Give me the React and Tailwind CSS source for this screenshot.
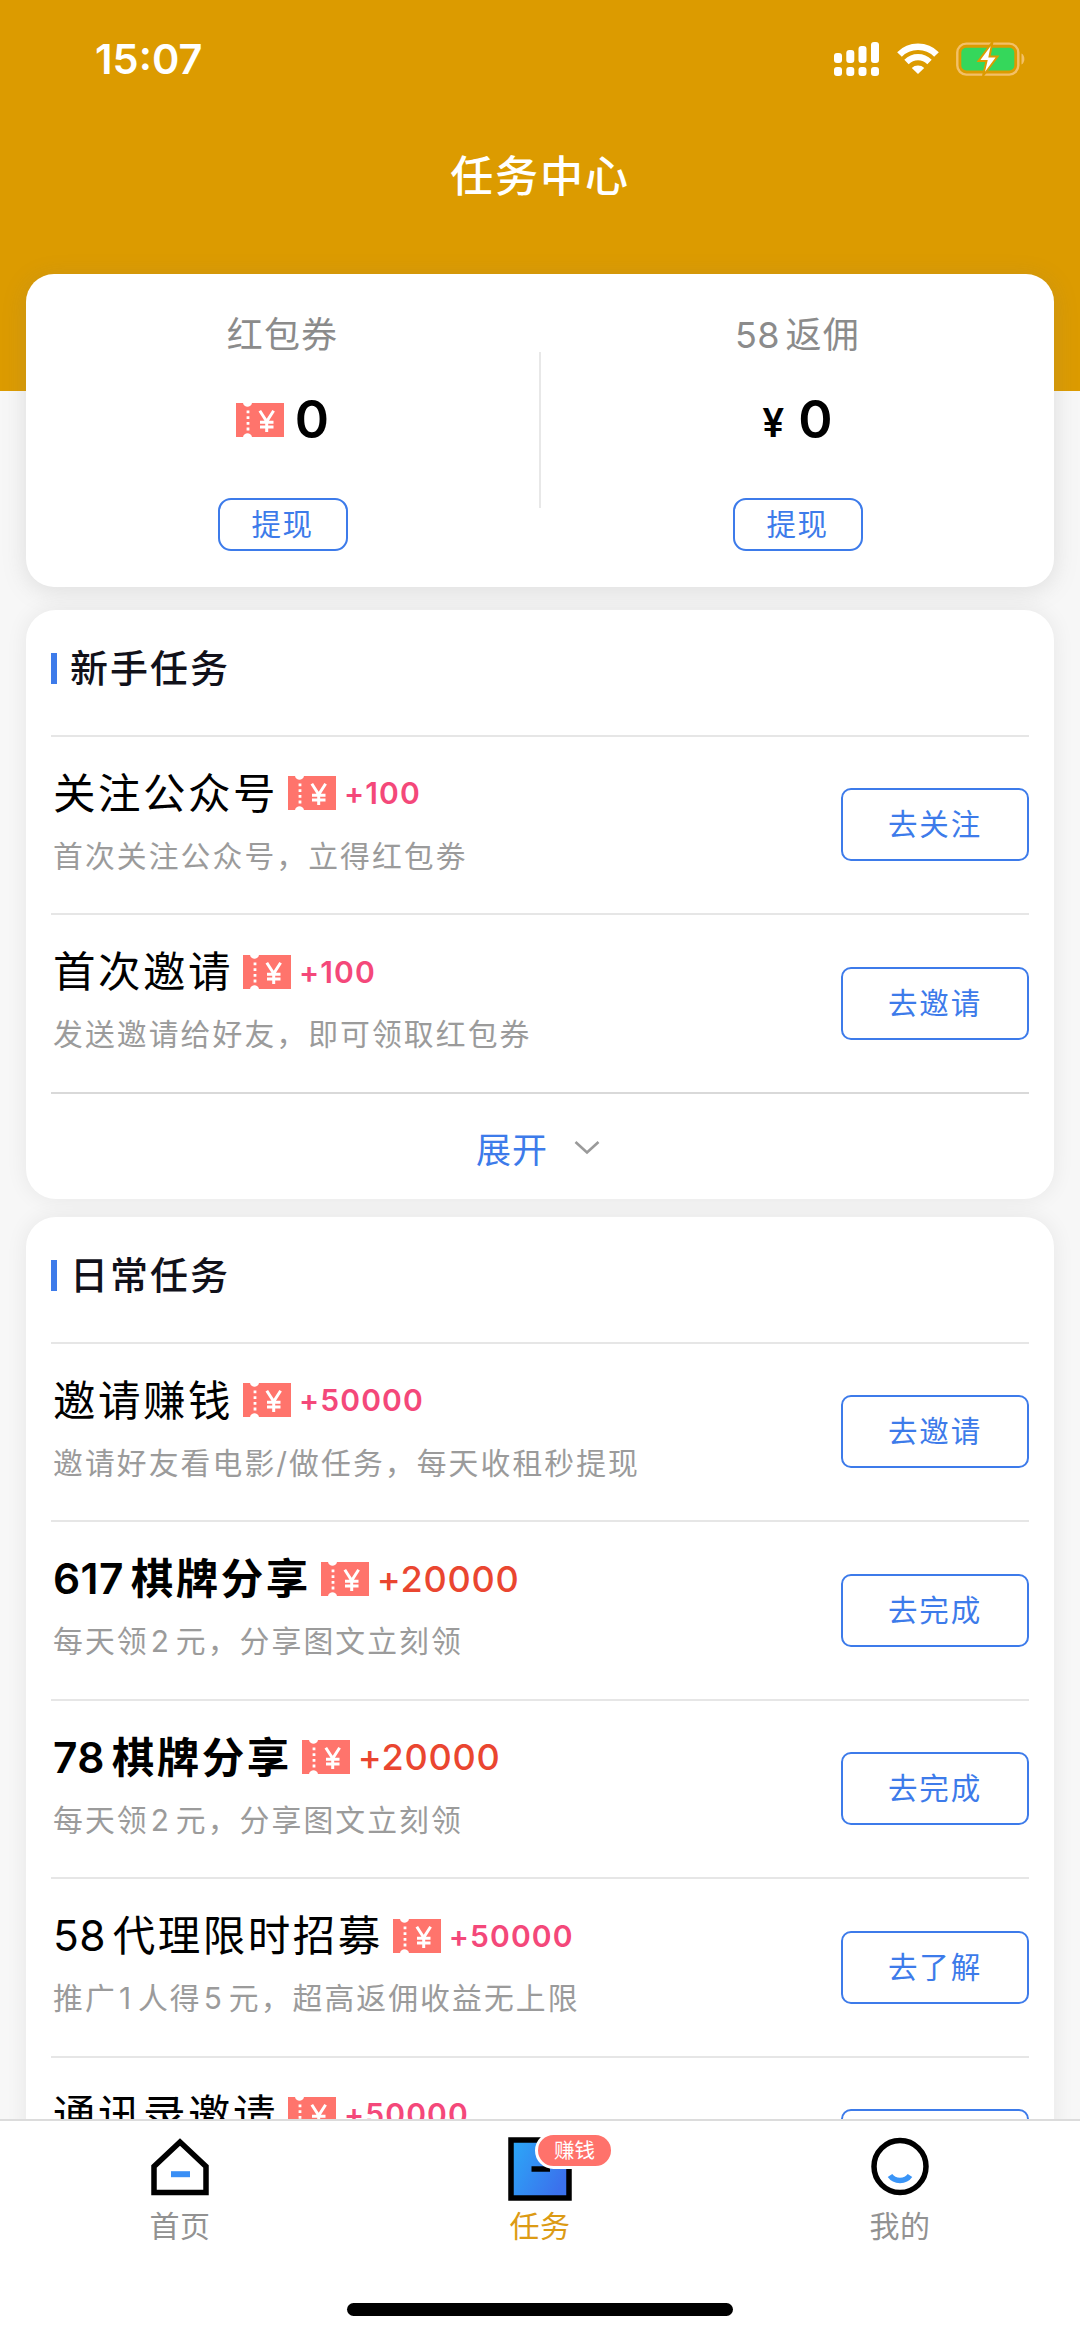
const newbieTasks = [
  { title: "关注公众号", desc: "首次关注公众号，立得红包劵", reward: "+100", action: "去关注" },
  { title: "首次邀请", desc: "发送邀请给好友，即可领取红包券", reward: "+100", action: "去邀请" },
];

const dailyTasks = [
  { title: "邀请赚钱", desc: "邀请好友看电影/做任务，每天收租秒提现", reward: "+50000", action: "去邀请" },
  { title: "617棋牌分享", desc: "每天领2元，分享图文立刻领", reward: "+20000", action: "去完成", hot: true },
  { title: "78棋牌分享", desc: "每天领2元，分享图文立刻领", reward: "+20000", action: "去完成", hot: true },
  { title: "58代理限时招募", desc: "推广1人得5元，超高返佣收益无上限", reward: "+50000", action: "去了解" },
  { title: "通讯录邀请", desc: "邀请通讯录好友，即可领取红包券", reward: "+50000", action: "去邀请" },
];

// Adds a small gap between digits and the Chinese characters around them
function Mixed({ text }) {
  return text.split(/(\d+)/).filter(Boolean).map((part, i) =>
    /^\d+$/.test(part) ? (
      <span key={i} className={i === 0 ? "mr-[0.16em] tracking-[0.01em]" : "ml-[0.07em] mr-[0.16em]"}>
        {part}
      </span>
    ) : (
      part
    )
  );
}

function Ticket() {
  return (
    <svg width="48" height="34" viewBox="0 0 48 34" className="shrink-0">
      <path d="M0 0H7C8 5 15 5 16 0H48V34H16C15 29 8 29 7 34H0Z" fill="#ff746c" />
      <path d="M12 7.5V28" stroke="#fff" strokeWidth="2.8" strokeDasharray="2.8 2.9" />
      <path
        d="M23.8 7.8L30.7 18.5L37.6 7.8M30.7 17.5V29M24 19.3H37.5M24 24H37.5"
        fill="none"
        stroke="#fff"
        strokeWidth="3"
      />
    </svg>
  );
}

function StatusBar() {
  return (
    <div className="flex h-[118px] items-center justify-between pl-[95px] pr-[54px]">
      <span className="mt-[2px] text-[41.5px] font-semibold leading-none">15:07</span>
      <div className="flex items-center">
        <svg width="46" height="34" viewBox="0 0 46 34" fill="#fff">
          <rect x="0" y="11" width="8" height="10" rx="3" />
          <rect x="12.3" y="8" width="8" height="13" rx="3" />
          <rect x="24.5" y="4" width="8" height="17" rx="3" />
          <rect x="37" y="0" width="8" height="21" rx="3" />
          <rect x="0" y="25" width="8" height="9" rx="3" />
          <rect x="12.3" y="25" width="8" height="9" rx="3" />
          <rect x="24.5" y="25" width="8" height="9" rx="3" />
          <rect x="37" y="25" width="8" height="9" rx="3" />
        </svg>
        <svg width="42" height="32" viewBox="0 0 42 32" fill="none" className="ml-[17px]">
          <path d="M2.5 11.5C12.5 1.2 29.5 1.2 39.5 11.5" stroke="#fff" strokeWidth="6.5" />
          <path d="M9.5 19C16 12.6 26 12.6 32.5 19" stroke="#fff" strokeWidth="6.2" />
          <path d="M21 31L14.8 25C18 21.7 24 21.7 27.2 25Z" fill="#fff" />
        </svg>
        <svg width="70" height="36" viewBox="0 0 70 36" className="ml-[17px]">
          <rect x="1.3" y="2.6" width="61" height="31" rx="9" fill="none" stroke="#f3c067" strokeWidth="2.4" />
          <rect x="5.3" y="6.8" width="53" height="22.6" rx="5" fill="#35d75b" />
          <path d="M65.5 12.5C69.3 14 69.3 22 65.5 23.5Z" fill="#f3c067" />
          <path
            d="M36.5 1L22.5 20H30.5L27 35L41.5 15.5H33.5Z"
            fill="#fff"
            stroke="#dc9b00"
            strokeWidth="2"
          />
        </svg>
      </div>
    </div>
  );
}

function Balance({ label, children }) {
  return (
    <div className="flex flex-1 flex-col items-center pt-[36px]">
      <div className="text-[36px] leading-[50px] tracking-[1.2px] text-[#8b8b8b]">
        <Mixed text={label} />
      </div>
      <div className="mt-[30px] flex h-[60px] items-center text-[52px] font-semibold leading-none text-black">
        {children}
      </div>
      <button className="mt-[48px] h-[53px] w-[130px] rounded-[13px] border-[2.5px] border-[#3d7bea] text-[29.5px] leading-none tracking-[1.4px] text-[#3d7bea]">
        提现
      </button>
    </div>
  );
}

function TaskRow({ title, desc, reward, action, hot }) {
  return (
    <div className="flex h-[178.5px] items-center justify-between border-t-2 border-[#e6e6e6]">
      <div className="h-full pl-[2px] pt-[27px]">
        <div className="flex h-[60px] items-center">
          <h3
            className={
              hot
                ? "text-[42.5px] font-semibold leading-[60px] tracking-[2.5px] text-black"
                : "text-[42.5px] leading-[60px] tracking-[2.5px] text-black"
            }
          >
            <Mixed text={title} />
          </h3>
          <div className="-mt-[1px] ml-[10px] flex items-center">
            <Ticket />
            <span
              className={
                hot
                  ? "ml-[8px] text-[36px] font-medium leading-none tracking-[0.8px] text-[#ea4630]"
                  : "ml-[8px] text-[30px] font-semibold leading-none tracking-[1.1px] text-[#f4487a]"
              }
            >
              {reward}
            </span>
          </div>
        </div>
        <p className="mt-[10px] text-[29.8px] leading-[44px] tracking-[2.1px] text-[#9b9b9b]">
          <Mixed text={desc} />
        </p>
      </div>
      <button className="h-[73px] w-[188px] shrink-0 rounded-[10px] border-[2.5px] border-[#3d7bea] text-[29.5px] leading-none tracking-[1.9px] text-[#3d7bea]">
        {action}
      </button>
    </div>
  );
}

function TaskCard({ title, tasks, children }) {
  return (
    <section className="rounded-[30px] bg-white px-[25px] shadow-[0_0_22px_rgba(0,0,0,0.07)]">
      <div className="flex h-[124.5px] items-center pb-[8px]">
        <span className="h-[31px] w-[6px] bg-[#3d7bea]" />
        <h2 className="ml-[13px] text-[38px] font-medium leading-none tracking-[2px] text-[#11111a]">{title}</h2>
      </div>
      {tasks.map((task) => (
        <TaskRow key={task.title} {...task} />
      ))}
      {children}
    </section>
  );
}

function TabBar() {
  return (
    <nav className="relative flex h-[218px] shrink-0 flex-col items-center border-t-2 border-[#dcdcdc] bg-white">
      <div className="flex w-full text-[30px] leading-[44px] text-[#929292]">
        <div className="flex flex-1 flex-col items-center pt-[16px]">
          <svg width="60" height="64" viewBox="0 0 60 64" fill="none">
            <path d="M4 55.5V29.5L30 5L56 29.5V55.5Z" stroke="#000" strokeWidth="5.5" />
            <path d="M21 37.2H40" stroke="#3a8ff5" strokeWidth="6" />
          </svg>
          <span className="mt-[3px] tracking-[0.5px]">首页</span>
        </div>
        <div className="flex flex-1 flex-col items-center pt-[16px] text-[#dc9b14]">
          <div className="relative">
            <svg width="64" height="64" viewBox="0 0 64 64">
              <defs>
                <linearGradient id="taskFill" x1="0" y1="0" x2="1" y2="0.5">
                  <stop offset="0" stopColor="#2baaf8" />
                  <stop offset="1" stopColor="#3b71ec" />
                </linearGradient>
              </defs>
              <rect x="3" y="3" width="58" height="58" fill="url(#taskFill)" stroke="#000" strokeWidth="5.5" />
              <path d="M23.5 32H42" stroke="#000" strokeWidth="5.5" />
            </svg>
            <span className="absolute -top-[5px] left-[27px] h-[37px] w-[79px] rounded-full border-[3px] border-white bg-[#ff726b] text-center text-[20.5px] leading-[31px] text-white">
              赚钱
            </span>
          </div>
          <span className="mt-[3px] tracking-[0.5px]">任务</span>
        </div>
        <div className="flex flex-1 flex-col items-center pt-[16px]">
          <svg width="60" height="64" viewBox="0 0 60 64" fill="none">
            <circle cx="30" cy="29.5" r="26" stroke="#000" strokeWidth="5.5" />
            <path d="M20 38.5C24.5 45 35.5 45 40 38.5" stroke="#3a95f7" strokeWidth="5.5" />
          </svg>
          <span className="mt-[3px] tracking-[0.5px]">我的</span>
        </div>
      </div>
      <div className="mt-[55px] h-[13px] w-[386px] rounded-full bg-black" />
    </nav>
  );
}

export default function App() {
  return (
    <div className="flex h-[2337px] w-[1080px] flex-col overflow-hidden bg-[#f7f7f7] font-[Inter,'Noto_Sans_CJK_SC',sans-serif]">
      <div className="min-h-0 flex-1 overflow-hidden">
        <header className="h-[391px] bg-[#dc9b00] text-white">
          <StatusBar />
          <h1 className="mt-[28px] text-center text-[43px] font-medium leading-[60px] tracking-[1.9px]">任务中心</h1>
        </header>

        <main className="relative -mt-[117px] px-[26px]">
          <section className="mb-[23px] flex h-[313px] rounded-[28px] bg-white shadow-[0_4px_24px_rgba(120,120,120,0.2)]">
            <Balance label="红包券">
              <Ticket />
              <span className="ml-[11px]">0</span>
            </Balance>
            <div className="mt-[78px] h-[156px] w-[2px] bg-[#e8e8e8]" />
            <Balance label="58返佣">
              <span className="mt-[5px] text-[39px]">¥</span>
              <span className="ml-[14px]">0</span>
            </Balance>
          </section>

          <div className="flex flex-col gap-[18px]">
            <TaskCard title="新手任务" tasks={newbieTasks}>
              <div className="flex h-[107.5px] items-center justify-center border-t-2 border-[#d9d9d9] pr-[4px] pt-[8px] text-[35px] tracking-[1px] text-[#3d7bea]">
                <span>展开</span>
                <svg width="26" height="16" viewBox="0 0 26 16" fill="none" className="-mt-[4px] ml-[26px]">
                  <path d="M1.5 2L13 12.5L24.5 2" stroke="#9a9a9a" strokeWidth="2.6" />
                </svg>
              </div>
            </TaskCard>
            <TaskCard title="日常任务" tasks={dailyTasks} />
          </div>
        </main>
      </div>
      <TabBar />
    </div>
  );
}
